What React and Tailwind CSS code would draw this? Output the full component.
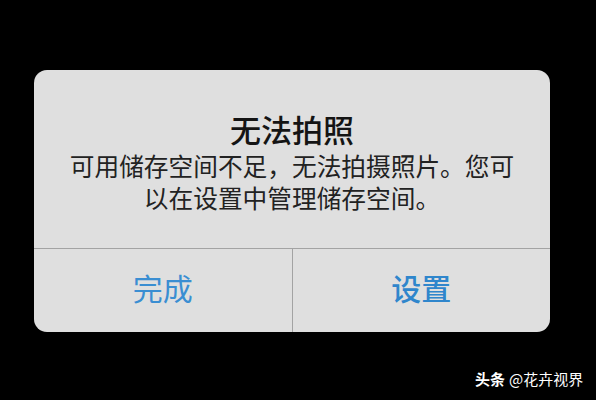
import React from 'react';

const cjk = { fontFamily: '"Noto Sans CJK SC", "Noto Sans", sans-serif' };

export default function App() {
  return (
    <div className="relative w-[596px] h-[400px] bg-black overflow-hidden" style={cjk}>
      <div className="pt-[70px] pl-[34px]">
        <div className="w-[516px] h-[262px] bg-[#dfdfdf] rounded-[13px] flex flex-col overflow-hidden">
          {/* message */}
          <div className="h-[179px] flex flex-col items-center pt-[41px] border-b border-[#a3a3a3]">
            <h1 className="text-[31px] leading-[36px] font-medium text-[#141414]">无法拍照</h1>
            <p className="mt-[2px] text-[24.7px] leading-[32px] text-[#222] text-center">
              可用储存空间不足，无法拍摄照片。您可
              <br />
              以在设置中管理储存空间。
            </p>
          </div>
          {/* buttons */}
          <div className="flex-1 flex">
            <button className="flex-1 flex items-center justify-center text-[30px] text-[#3a8ed2] border-r border-[#a3a3a3] pb-[6px]">
              完成
            </button>
            <button className="flex-1 flex items-center justify-center text-[30px] font-medium text-[#2f86cc] pb-[6px]">
              设置
            </button>
          </div>
        </div>
      </div>
      <div className="absolute left-[475px] top-[369px] text-[15px] leading-[20px] text-white flex items-center gap-[4px]">
        <span className="font-bold">头条</span>
        <span>@花卉视界</span>
      </div>
    </div>
  );
}
